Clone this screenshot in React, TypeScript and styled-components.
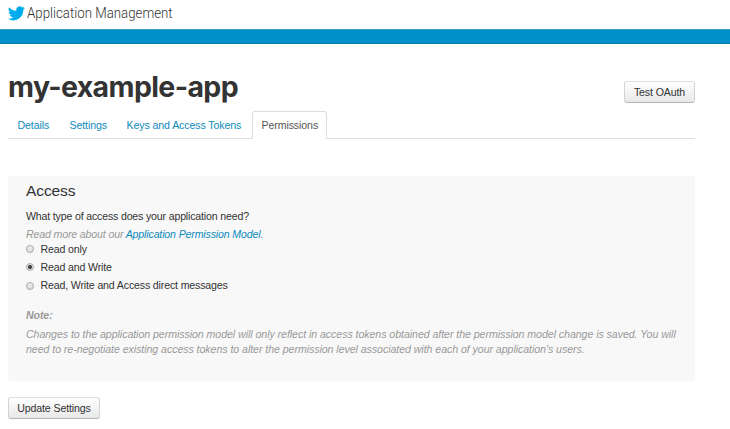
import React, { useState } from "react";
import styled, { createGlobalStyle } from "styled-components";

const Global = createGlobalStyle`
  * { box-sizing: border-box; }
  body {
    margin: 0;
    background: #fff;
    color: #333;
    font: 10.6px/15px "Liberation Sans", Arial, sans-serif;
    letter-spacing: -0.1px;
  }
`;

const Header = styled.header`
  display: flex;
  align-items: center;
  height: 29px;
  padding: 0 0 3px 8px;
`;

const Bird = styled.svg`
  width: 17px;
  height: 15px;
  fill: #00aced;
`;

const Brand = styled.span`
  margin-left: 2px;
  font: 300 15px/20px Roboto, sans-serif;
  letter-spacing: 0;
  color: #333;
  white-space: nowrap;
  transform: scaleX(0.885);
  transform-origin: left;
`;

const Stripe = styled.div`
  height: 15px;
  background: #0090c9;
  border-top: 1px solid #3a98bb;
  border-bottom: 1px solid #0a7aa8;
`;

const Page = styled.main`
  width: 687px;
  margin-left: 8px;
`;

const TitleRow = styled.div`
  display: flex;
  justify-content: space-between;
  height: 67px;
  padding-top: 22px;
`;

const Title = styled.h1`
  margin: 0;
  font: 700 28.5px/42px Inter, sans-serif;
  letter-spacing: -0.63px;
  color: #333;
  white-space: nowrap;
`;

const Button = styled.button<{ $width: number }>`
  width: ${(p) => p.$width}px;
  height: 22px;
  padding: 1px 0 0;
  border: 1px solid #ccc;
  border-color: #dedede #d2d2d2 #b5b5b5;
  border-radius: 3px;
  background: linear-gradient(#fff, #e8e8e8);
  font: 10.6px/19px "Liberation Sans", Arial, sans-serif;
  letter-spacing: -0.12px;
  color: #333;
`;

const OAuthSlot = styled.div`
  padding-top: 15px;
`;

const Tabs = styled.nav`
  display: flex;
  height: 28px;
  border-bottom: 1px solid #ddd;
`;

const Tab = styled.a<{ $active?: boolean; $width: number }>`
  width: ${(p) => p.$width}px;
  height: 28px;
  padding-left: 8.5px;
  border: 1px solid ${(p) => (p.$active ? "#ddd" : "transparent")};
  border-bottom-color: ${(p) => (p.$active ? "#fff" : "transparent")};
  border-radius: 3px 3px 0 0;
  color: ${(p) => (p.$active ? "#555" : "#0d8abb")};
  line-height: 26px;
  white-space: nowrap;
`;

const Panel = styled.section`
  height: 205px;
  margin: 37px 0 16px;
  padding: 5px 18px 0;
  border-radius: 3px;
  background: #f8f8f8;
`;

const Heading = styled.h2`
  margin: 0;
  font-size: 15.5px;
  font-weight: 400;
  line-height: 20px;
`;

const Question = styled.div`
  margin-top: 8px;
  letter-spacing: -0.17px;
`;

const Hint = styled.div`
  margin-top: 3px;
  font-style: italic;
  letter-spacing: -0.15px;
  color: #999;
`;

const Link = styled.a`
  color: #0d8abb;
`;

const Options = styled.div`
  margin-top: -2px;
`;

const Option = styled.label`
  display: flex;
  align-items: center;
  height: 18.3px;
  letter-spacing: -0.15px;
`;

const Radio = styled.input`
  appearance: none;
  width: 8px;
  height: 8px;
  margin: 0 6.5px 0 0;
  border: 1px solid #a8a8a8;
  border-radius: 50%;
  background: linear-gradient(#eee, #ddd);
  &:checked {
    background: radial-gradient(circle, #444 0 1.6px, #e4e4e4 2.4px);
  }
`;

const NoteTitle = styled.div`
  margin-top: 13px;
  font-weight: 700;
  font-style: italic;
  color: #999;
`;

const Note = styled.p`
  margin: 4px 0 0;
  font-style: italic;
  line-height: 15px;
  letter-spacing: -0.052px;
  color: #999;
  white-space: nowrap;
`;

const tabs = [
  { label: "Details", width: 52 },
  { label: "Settings", width: 57 },
  { label: "Keys and Access Tokens", width: 135 },
  { label: "Permissions", width: 75 },
];
const options = ["Read only", "Read and Write", "Read, Write and Access direct messages"];

export default function App() {
  const [access, setAccess] = useState(options[1]);
  return (
    <>
      <Global />
      <Header>
        <Bird viewBox="0 0 24 20">
          <path d="M24 2.4a10 10 0 0 1-2.8.8A5 5 0 0 0 23.3.5a10 10 0 0 1-3.1 1.2A4.9 4.9 0 0 0 11.8 6.2 14 14 0 0 1 1.7 1a4.9 4.9 0 0 0 1.5 6.6A5 5 0 0 1 1 7a4.9 4.9 0 0 0 3.9 4.9 5 5 0 0 1-2.2.1 4.9 4.9 0 0 0 4.6 3.4A10 10 0 0 1 0 17.5 14 14 0 0 0 21.5 5 10 10 0 0 0 24 2.4z" />
        </Bird>
        <Brand>Application Management</Brand>
      </Header>
      <Stripe />
      <Page>
        <TitleRow>
          <Title>my-example-app</Title>
          <OAuthSlot>
            <Button $width={71}>Test OAuth</Button>
          </OAuthSlot>
        </TitleRow>
        <Tabs>
          {tabs.map((t) => (
            <Tab key={t.label} $width={t.width} $active={t.label === "Permissions"}>
              {t.label}
            </Tab>
          ))}
        </Tabs>
        <Panel>
          <Heading>Access</Heading>
          <Question>What type of access does your application need?</Question>
          <Hint>
            Read more about our <Link>Application Permission Model</Link>.
          </Hint>
          <Options>
            {options.map((o) => (
              <Option key={o}>
                <Radio type="radio" name="access" checked={access === o} onChange={() => setAccess(o)} />
                {o}
              </Option>
            ))}
          </Options>
          <NoteTitle>Note:</NoteTitle>
          <Note>
            Changes to the application permission model will only reflect in access tokens obtained after the permission model change is saved. You will
            <br />
            need to re-negotiate existing access tokens to alter the permission level associated with each of your application's users.
          </Note>
        </Panel>
        <Button $width={92}>Update Settings</Button>
      </Page>
    </>
  );
}
